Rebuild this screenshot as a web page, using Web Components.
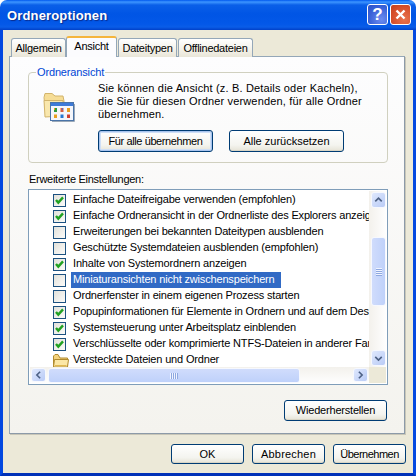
<!DOCTYPE html>
<html>
<head>
<meta charset="utf-8">
<title>Ordneroptionen</title>
<style>
  html, body { margin: 0; padding: 0; background: #fff; }
  body { width: 416px; height: 476px; overflow: hidden; font: 11px "Liberation Sans", Arial, sans-serif; color: #000; }
</style>
</head>
<body>
<xp-window title="Ordneroptionen">
  <xp-tabs>
    <xp-tab style="width:55px">Allgemein</xp-tab>
    <xp-tab active style="width:51px">Ansicht</xp-tab>
    <xp-tab style="width:59px">Dateitypen</xp-tab>
    <xp-tab style="width:75px">Offlinedateien</xp-tab>
  </xp-tabs>
  <xp-page>
    <xp-group legend="Ordneransicht">
      Sie können die Ansicht (z. B. Details oder Kacheln),<br>
      die Sie für diesen Ordner verwenden, für alle Ordner<br>
      übernehmen.
      <xp-button slot="actions" width="115" height="22" focused style="letter-spacing:-.4px">Für alle übernehmen</xp-button>
      <xp-button slot="actions" width="115" height="22" style="letter-spacing:0">Alle zurücksetzen</xp-button>
    </xp-group>
    <xp-label>Erweiterte Einstellungen:</xp-label>
    <xp-list>
      <xp-row checked>Einfache Dateifreigabe verwenden (empfohlen)</xp-row>
      <xp-row checked>Einfache Ordneransicht in der Ordnerliste des Explorers anzeigen</xp-row>
      <xp-row>Erweiterungen bei bekannten Dateitypen ausblenden</xp-row>
      <xp-row>Geschützte Systemdateien ausblenden (empfohlen)</xp-row>
      <xp-row checked>Inhalte von Systemordnern anzeigen</xp-row>
      <xp-row selected>Miniaturansichten nicht zwischenspeichern</xp-row>
      <xp-row>Ordnerfenster in einem eigenen Prozess starten</xp-row>
      <xp-row checked>Popupinformationen für Elemente in Ordnern und auf dem Desktop anzeigen</xp-row>
      <xp-row checked>Systemsteuerung unter Arbeitsplatz einblenden</xp-row>
      <xp-row checked>Verschlüsselte oder komprimierte NTFS-Dateien in anderer Farbe anzeigen</xp-row>
      <xp-row folder>Versteckte Dateien und Ordner</xp-row>
    </xp-list>
    <xp-button slot="footer" width="103" height="21" style="letter-spacing:-.2px">Wiederherstellen</xp-button>
  </xp-page>
  <xp-button slot="buttons" width="73" height="20">OK</xp-button>
  <xp-button slot="buttons" width="73" height="20" style="letter-spacing:.2px">Abbrechen</xp-button>
  <xp-button slot="buttons" width="73" height="20" style="letter-spacing:-.5px">Übernehmen</xp-button>
</xp-window>
<script>
const define = (name, css, html, extra = {}) => {
  customElements.define(name, class extends HTMLElement {
    constructor() {
      super()
      this.attachShadow({ mode: 'open' }).innerHTML = `<style>${css}</style>${typeof html === 'function' ? html(this) : html}`
    }
    connectedCallback() {
      if (extra.connected) extra.connected(this)
    }
  })
}

const folderSvg = `
<svg width="17" height="15" viewBox="0 0 17 15" style="display:block;overflow:visible">
  <path d="M1.5 3V14H15.5V5H8L6 1.5H3Z" fill="#f4d27c" stroke="#b08a2e"/>
  <path d="M1.5 14L2.5 6.5H16.5L15.5 14Z" fill="#fbe7a6" stroke="#b08a2e"/>
  <path d="M3 12.5H14.5" stroke="#e0b850"/>
</svg>`

const checkSvg = `
<svg width="13" height="13" viewBox="0 0 13 13">
  <path d="M3 6L5.3 8.6L10 3.4" fill="none" stroke="#21a121" stroke-width="2.4"/>
</svg>`

const arrow = {
  up: 'M4 9L8 5L12 9',
  down: 'M4 6L8 10L12 6',
  left: 'M10 3.5L6 7.5L10 11.5',
  right: 'M6 3.5L10 7.5L6 11.5'
}

define('xp-window', `
  :host { display: flex; flex-direction: column; width: 416px; height: 476px; box-sizing: border-box; }
  .title { flex: none; height: 30px; box-sizing: border-box; display: flex; align-items: center; gap: 2px; padding: 0 5px 1px 7px;
    border-radius: 7px 7px 0 0;
    background: linear-gradient(#0058ee 0, #3d95ff 2px, #0a5fe8 5px, #0055e5 14px, #0358e8 24px, #0a5de8 27px, #0040c8 30px); }
  .title span { flex: 1; font: bold 13px "Liberation Sans", sans-serif; letter-spacing: .15px; color: #fff; text-shadow: 1px 1px 1px #0a2a8a; padding-top: 1px; }
  .cap { width: 21px; height: 21px; box-sizing: border-box; border: 1px solid #fff; border-radius: 3px; display: flex; align-items: center; justify-content: center;
    color: #fff; font: bold 17px "Liberation Sans", sans-serif; }
  .help { background: radial-gradient(circle at 70% 75%, #6d8cf0, #3a62d8 60%, #2a50c8); }
  .close { background: radial-gradient(circle at 70% 75%, #e8734d, #d8502c 60%, #c23e1a); }
  .body { flex: 1; min-height: 0; background: #ece9d8; border: solid #0348e0; border-width: 0 3px 3px; border-bottom-color: #0031b8; padding: 7px 6px 9px; display: flex; flex-direction: column; }
  .foot { flex: none; display: flex; justify-content: flex-end; gap: 8px; padding: 10px 1px 0 0; }
`, `
  <div class="title"><span></span>
    <div class="cap help">?</div>
    <div class="cap close"><svg width="13" height="13" viewBox="0 0 13 13"><path d="M2.5 2.5L10.5 10.5M10.5 2.5L2.5 10.5" stroke="#fff" stroke-width="2.4"/></svg></div>
  </div>
  <div class="body"><slot></slot><div class="foot"><slot name="buttons"></slot></div></div>
`, { connected: (el) => { el.shadowRoot.querySelector('span').textContent = el.getAttribute('title'); el.removeAttribute('title') } })

define('xp-tabs', `
  :host { display: flex; align-items: flex-end; height: 20px; padding-left: 2px; flex: none; position: relative; z-index: 1; margin-bottom: -1px; letter-spacing: -.25px; }
`, `<slot></slot>`)

define('xp-tab', `
  :host { display: block; flex: none; box-sizing: border-box; height: 19px; padding-top: 3px; text-align: center; margin-right: 1px; border: 1px solid #94a7b8; border-bottom: 0; border-radius: 3px 3px 0 0;
    background: linear-gradient(#fff, #f3f1e8 60%, #e9e6d8); white-space: nowrap; }
  :host([active]) { height: 21px; padding-top: 2px; margin-left: -1px; background: #fcfcfe; border-top: 2px solid #f5b53c; border-bottom: 0; }
`, `<slot></slot>`)

define('xp-page', `
  :host { display: flex; flex-direction: column; flex: 1; min-height: 0; box-sizing: border-box; margin-right: 2px; border: 1px solid #94a7b8; border-right-color: #8c9aa8; border-bottom-color: #8c9aa8; box-shadow: 1px 1px 0 #c8c6b8;
    background: linear-gradient(#fdfdfe, #f4f3ee); padding: 15px 17px 12px 18px; }
  .foot { margin-top: auto; display: flex; justify-content: flex-end; }
`, `<slot></slot><div class="foot"><slot name="footer"></slot></div>`)

define('xp-group', `
  :host { display: block; flex: none; position: relative; box-sizing: border-box; width: 360px; height: 91px; border: 1px solid #d0d0bf; border-radius: 4px; }
  .legend { position: absolute; left: 7px; top: -7px; padding: 0 1px; color: #0046d5; background: #fdfdfe; line-height: 13px; letter-spacing: -.15px; }
  .inner { display: flex; padding: 9px 0 0 14px; gap: 23px; }
  .text { line-height: 13px; white-space: nowrap; letter-spacing: .16px; }
  .actions { display: flex; gap: 16px; margin-top: 9px; }
`, `
  <div class="legend"></div>
  <div class="inner">
    <svg width="32" height="32" viewBox="0 0 32 32" style="flex:none;margin-top:10px;overflow:visible">
      <path d="M1 5.5L2 1.5H9L12 4H20L21 9V24H3Z" fill="#f6dd96" stroke="#d2b46c"/>
      <path d="M2 25L1 8.5H20V24Z" fill="#f9e7ad" stroke="#d2b46c"/>
      <rect x="7.5" y="10.5" width="23" height="18" fill="#f4f6fb" stroke="#4a74a8"/>
      <rect x="8" y="11" width="22" height="3" fill="#3e7ad8"/>
      <rect x="11" y="16" width="3" height="4" fill="#2e9c3e"/><rect x="11" y="16" width="1" height="2" fill="#e8a020"/>
      <rect x="17.5" y="16" width="3" height="4" fill="#d86040"/><rect x="19" y="16" width="1" height="2" fill="#5070d0"/>
      <rect x="24" y="16" width="3" height="4" fill="#e8a020"/>
      <rect x="11" y="22.5" width="3" height="3.5" fill="#e8a020"/>
      <rect x="17.5" y="22.5" width="3" height="3.5" fill="#2878d0"/>
      <rect x="24" y="22.5" width="3" height="3.5" fill="#d04030"/>
      <path d="M9 29.5H31.5V12" fill="none" stroke="#9aa8b8"/>
    </svg>
    <div>
      <div class="text"><slot></slot></div>
      <div class="actions"><slot name="actions"></slot></div>
    </div>
  </div>
`, { connected: (el) => { el.shadowRoot.querySelector('.legend').textContent = el.getAttribute('legend'); el.removeAttribute('legend') } })

define('xp-label', `
  :host { display: block; flex: none; line-height: 13px; margin: 10px 0 3px 1px; letter-spacing: -.28px; }
`, `<slot></slot>`)

define('xp-button', `
  :host { display: flex; align-items: center; justify-content: center; flex: none; box-sizing: border-box; border: 1px solid #003c74; border-radius: 3px; white-space: nowrap;
    background: linear-gradient(#fff, #f4f4ef 70%, #e6e3d6); box-shadow: inset 0 -1px 0 #d8d5c6; padding-bottom: 1px; }
  :host([focused]) { box-shadow: inset 0 0 0 1px #a8c4ee, inset 0 0 0 2px #cfdff6; }
`, `<slot></slot>`, { connected: (el) => {
  el.style.width = el.getAttribute('width') + 'px'
  el.style.height = el.getAttribute('height') + 'px'
} })

define('xp-list', `
  :host { display: block; flex: none; width: 360px; height: 196px; box-sizing: border-box; border: 1px solid #7f9db9; background: #fff; position: relative; padding: 1px; letter-spacing: -.17px; }
  .grid { display: grid; grid-template: 1fr 16px / 1fr 17px; height: 100%; }
  .rows { overflow: hidden; padding-top: 1px; }
  .v { display: flex; flex-direction: column; background: linear-gradient(90deg, #f3f1ec, #fefefe); padding: 1px 0 1px 2px; }
  .h { display: flex; background: linear-gradient(#f3f1ec, #fefefe); padding: 1px 1px 0 1px; }
  .corner { background: #ece9d8; }
  .btn { flex: none; width: 15px; height: 16px; box-sizing: border-box; border: 1px solid #f6f8fe; border-radius: 3px; background: linear-gradient(135deg, #dfe8fd, #b9cbf6); display: flex; align-items: center; justify-content: center; }
  .h .btn { height: 14px; }
  .thumb { box-sizing: border-box; border: 1px solid #f6f8fe; border-radius: 3px; display: flex; align-items: center; justify-content: center; }
  .v .thumb { width: 15px; height: 69px; margin: 29px 0 43px; background: linear-gradient(90deg, #d0dcfc, #bfd1fa); }
  .h .thumb { flex: none; width: 252px; margin-left: 2px; background: linear-gradient(#d0dcfc, #bfd1fa); }
  svg { display: block; }
`, `
  <div class="grid">
    <div class="rows"><slot></slot></div>
    <div class="v">
      <div class="btn"><svg width="15" height="15" viewBox="0 0 16 16"><path d="${arrow.up}" fill="none" stroke="#4d6185" stroke-width="2"/></svg></div>
      <div class="thumb"><svg width="8" height="8" viewBox="0 0 8 8"><path d="M1 .5H7M1 2.5H7M1 4.5H7M1 6.5H7" stroke="#f0f4ff"/><path d="M1 1.5H7M1 3.5H7M1 5.5H7M1 7.5H7" stroke="#8ea8e0"/></svg></div>
      <div class="btn" style="margin-top:auto"><svg width="15" height="15" viewBox="0 0 16 16"><path d="${arrow.down}" fill="none" stroke="#4d6185" stroke-width="2"/></svg></div>
    </div>
    <div class="h">
      <div class="btn"><svg width="14" height="14" viewBox="0 0 16 15"><path d="${arrow.left}" fill="none" stroke="#4d6185" stroke-width="2"/></svg></div>
      <div class="thumb"><svg width="8" height="8" viewBox="0 0 8 8"><path d="M.5 1V7M2.5 1V7M4.5 1V7M6.5 1V7" stroke="#f0f4ff"/><path d="M1.5 1V7M3.5 1V7M5.5 1V7M7.5 1V7" stroke="#8ea8e0"/></svg></div>
      <div class="btn" style="margin-left:auto"><svg width="14" height="14" viewBox="0 0 16 15"><path d="${arrow.right}" fill="none" stroke="#4d6185" stroke-width="2"/></svg></div>
    </div>
    <div class="corner"></div>
  </div>
`)

define('xp-row', `
  :host { display: flex; align-items: center; height: 16px; padding-left: 23px; white-space: nowrap; }
  .box { flex: none; width: 13px; height: 13px; box-sizing: border-box; border: 1px solid #1c5180; background: linear-gradient(135deg, #e2e1da, #fbfbf9); }
  .box svg { display: block; margin: -1px; }
  .folder { flex: none; width: 14px; margin-left: -1px; }
  .text { margin-left: 5px; padding: 0 6px 0 2px; height: 16px; line-height: 15px; }
  :host([selected]) .text { background: #316ac5; color: #fff; }
`, (el) => {
  const mark = el.hasAttribute('folder')
    ? `<span class="folder">${folderSvg}</span>`
    : `<span class="box">${el.hasAttribute('checked') ? checkSvg : ''}</span>`
  return `${mark}<span class="text"><slot></slot></span>`
})
</script>
</body>
</html>
